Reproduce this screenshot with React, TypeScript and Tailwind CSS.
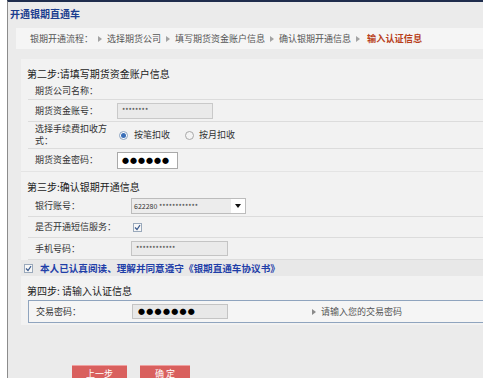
import React from "react";

const font = {
  fontFamily: '"Noto Sans CJK SC", "Liberation Sans", sans-serif',
};

function Arrow() {
  return (
    <svg className="mx-[5px]" width="4" height="6" viewBox="0 0 4 6">
      <path d="M0 0 L4 3 L0 6 Z" fill="#a3a3a3" />
    </svg>
  );
}

function Check() {
  return (
    <span className="flex h-[9px] w-[9px] items-center justify-center border border-[#9aa9bb] bg-[#f7f7f7]">
      <svg width="7" height="7" viewBox="0 0 7 7">
        <path d="M1 3.5 L3 5.5 L6 1.2" stroke="#3b5b8e" strokeWidth="1.2" fill="none" />
      </svg>
    </span>
  );
}

function Row({
  label,
  labelWidth,
  children,
  height,
}: {
  label: React.ReactNode;
  labelWidth: string;
  children?: React.ReactNode;
  height: string;
}) {
  return (
    <div className={`ml-[7px] flex items-center border-b border-[#dcdcdc] ${height}`}>
      <div className={`pl-[7px] leading-[12px] text-[#333] ${labelWidth}`}>{label}</div>
      {children}
    </div>
  );
}

export default function App() {
  return (
    <div className="w-[483px] h-[378px] overflow-hidden bg-white pl-[7px] text-[9px]" style={font}>
      <div className="h-full border-l border-[#8c8c8c] border-t-2 border-t-[#1f2d4d] bg-[#ebebeb]">
        <div className="h-[26px] pl-[2px] pt-[4px] text-[10px] font-bold text-[#1b3d8f]">开通银期直通车</div>

        <div className="ml-[8px] flex h-[21px] items-center bg-[#f5f5f5] pl-[14px] text-[#555]">
          <span>银期开通流程：</span>
          <Arrow />
          <span>选择期货公司</span>
          <Arrow />
          <span>填写期货资金账户信息</span>
          <Arrow />
          <span>确认银期开通信息</span>
          <Arrow />
          <span className="ml-[2px] text-[9.2px] font-bold text-[#b8401a]">输入认证信息</span>
        </div>

        <div className="ml-[13px] mt-[10px]">
          {/* step 2 */}
          <div className="bg-[#f2f2f2] border-b border-[#e4e4e4]">
            <div className="flex h-[24px] items-end pl-[6px] pb-[2px] text-[10px] text-[#1a1a1a]">第二步:请填写期货资金账户信息</div>
            <Row label="期货公司名称：" labelWidth="w-[89px]" height="h-[17px]" />
            <Row label="期货资金账号：" labelWidth="w-[89px]" height="h-[22px]">
              <div className="flex h-[16px] w-[96px] items-center border border-[#c9c9c9] bg-[#eaeaea] pl-[4px] text-[7px] text-[#333]">
                ********
              </div>
            </Row>
            <Row label="选择手续费扣收方式：" labelWidth="w-[89px] pr-[8px]" height="h-[27px]">
              <div className="flex items-center text-[#333]">
                <span className="ml-[2px] flex h-[9px] w-[9px] items-center justify-center rounded-full border border-[#8aa2c0] bg-white">
                  <span className="h-[5px] w-[5px] rounded-full bg-[#3a6fb8]" />
                </span>
                <span className="ml-[6px]">按笔扣收</span>
                <span className="ml-[15px] h-[9px] w-[9px] rounded-full border border-[#a8a8a8] bg-[#f4f4f4]" />
                <span className="ml-[5px]">按月扣收</span>
              </div>
            </Row>
            <Row label="期货资金密码：" labelWidth="w-[89px]" height="h-[22px] border-b-0">
              <div className="flex h-[17px] w-[61px] items-center border border-[#a9a9a9] bg-white pl-[4px] text-[7px] leading-none tracking-[1px] text-black">
                ●●●●●●
              </div>
            </Row>
          </div>

          {/* step 3 */}
          <div className="bg-[#f2f2f2]">
            <div className="flex h-[24px] items-end pl-[6px] pb-[2px] text-[10px] text-[#1a1a1a]">第三步:确认银期开通信息</div>
            <Row label="银行账号：" labelWidth="w-[103px]" height="h-[21px]">
              <div className="flex h-[16px] w-[115px] items-center border border-[#bcbcbc] bg-white">
                <div className="flex h-full flex-1 items-center bg-[#ececec] pl-[2px] text-[7px] text-[#333]">
                  622280 ************
                </div>
                <div className="flex w-[14px] justify-center">
                  <svg width="6" height="4" viewBox="0 0 6 4">
                    <path d="M0 0 L6 0 L3 4 Z" fill="#111" />
                  </svg>
                </div>
              </div>
            </Row>
            <Row label="是否开通短信服务：" labelWidth="w-[103px]" height="h-[21px]">
              <span className="ml-[2px]">
                <Check />
              </span>
            </Row>
            <Row label="手机号码：" labelWidth="w-[103px]" height="h-[22px]">
              <div className="flex h-[15px] w-[97px] items-center border border-[#c4c4c4] bg-[#eaeaea] pl-[4px] text-[7px] text-[#333]">
                ************
              </div>
            </Row>
          </div>

          {/* agreement */}
          <div className="flex h-[16px] items-center bg-[#e8e8e8] pl-[3px] text-[9.6px] font-bold text-[#1f3fa8]">
            <Check />
            <span className="ml-[7px]">本人已认真阅读、理解并同意遵守《银期直通车协议书》</span>
          </div>

          {/* step 4 */}
          <div className="bg-[#f2f2f2] pb-[2px]">
            <div className="flex h-[24px] items-end pl-[6px] pb-[2px] text-[10px] text-[#1a1a1a]">第四步:&nbsp;请输入认证信息</div>
            <div className="ml-[7px] flex h-[23px] items-center border border-r-0 border-[#8fa4be] bg-[#f5f5f5]">
              <div className="w-[103px] pl-[7px] text-[#333]">交易密码：</div>
              <div className="flex h-[15px] w-[96px] items-center border border-[#c4c4c4] bg-[#e8e8e8] pl-[5px] text-[7px] leading-none tracking-[1.3px] text-black">
                ●●●●●●●
              </div>
              <div className="ml-[84px] flex items-center text-[#555]">
                <svg className="mr-[5px]" width="4" height="6" viewBox="0 0 4 6">
                  <path d="M0 0 L4 3 L0 6 Z" fill="#8a8a8a" />
                </svg>
                请输入您的交易密码
              </div>
            </div>
          </div>

          <div className="ml-[51px] mt-[40px] flex gap-[13px]">
            <button className="h-[16px] w-[55px] border-t border-[#f0a0a0] bg-[#d9605e] text-[9px] leading-[14px] text-white">
              上一步
            </button>
            <button className="h-[16px] w-[50px] border-t border-[#f0a0a0] bg-[#d9605e] text-[9px] leading-[14px] text-white">
              确&nbsp;定
            </button>
          </div>
        </div>
      </div>
    </div>
  );
}
